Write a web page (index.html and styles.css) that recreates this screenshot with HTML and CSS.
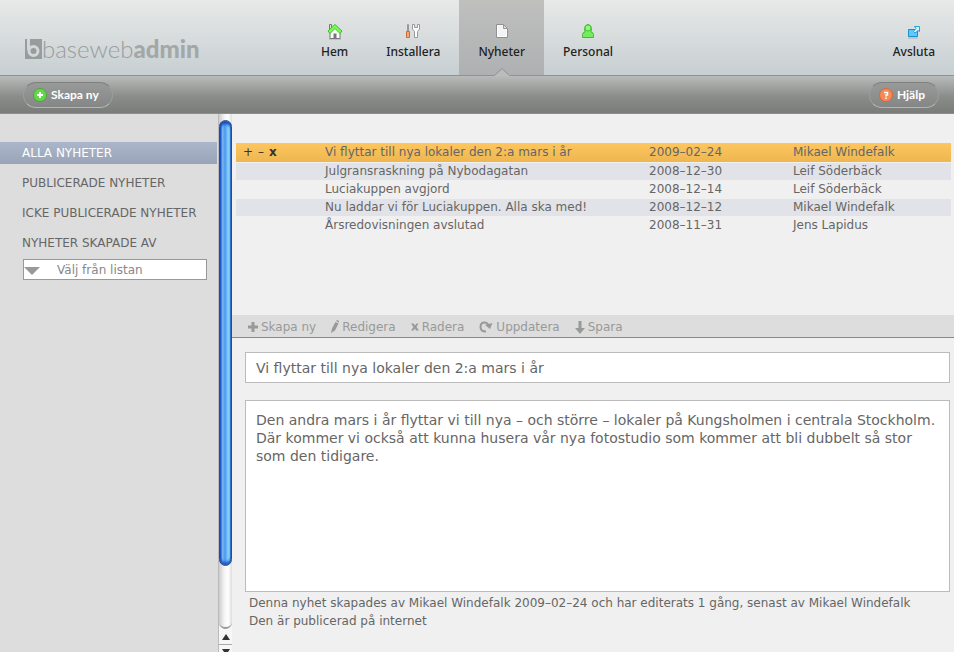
FILE: index.html
```html
<!DOCTYPE html>
<html lang="sv">
<head>
<meta charset="utf-8">
<title>basewebadmin</title>
<link rel="stylesheet" href="styles.css">
</head>
<body>
<header class="top">
  <a class="logo" href="#">
    <svg width="17" height="20" viewBox="0 0 17 20" aria-hidden="true"><path fill="#999c9c" d="M0 0H17V20H0Z"/><path d="M3.500 0V11" stroke="#d2d7d8" stroke-width="3"/><circle cx="8.500" cy="12" r="4.500" fill="none" stroke="#d2d7d8" stroke-width="3"/></svg>
    <span class="logo-light">baseweb</span><span class="logo-bold">admin</span>
  </a>
  <nav class="menu">
    <a class="menu-item" href="#">
      <svg width="16" height="17" viewBox="0 0 16 17"><path d="M2 16H14" stroke="#a9aeae"/><path d="M2.500 9V1.500H4.500V5" fill="#ddd" stroke="#777"/><path d="M3 9L8 4L13 9V15.500H3Z" fill="#fff" stroke="#777"/><path d="M6.500 15V10.500H9.500V15Z" fill="#777"/><path d="M1 8L8 1.500L15 8L13 10.500L8 5.500L3 10.500Z" fill="#7df75b" stroke="#36c51b" stroke-linejoin="round"/></svg>
      <span>Hem</span></a>
    <a class="menu-item" href="#">
      <svg width="16" height="17" viewBox="0 0 16 17"><path d="M2.500 1.500H3.500V8H2.500Z" fill="#fff" stroke="#999"/><path d="M1.500 8.500H4.500V14.500H1.500Z" fill="#ffa36b" stroke="#c96a42" stroke-linejoin="round"/><path d="M7.500 1.500H9.500V4.500H12.500V1.500H14.500V6L12.500 8.500V14.500H9.500V8.500L7.500 6Z" fill="#fff" stroke="#999" stroke-linejoin="round"/></svg>
      <span>Installera</span></a>
    <a class="menu-item current" href="#">
      <svg width="16" height="17" viewBox="0 0 16 17"><path d="M2.500 1.500H9.500L13.500 5.500V14.500H2.500Z" fill="#f4f4f4" stroke="#909090"/><path d="M3.500 2.500V13.500H12.500V6" fill="none" stroke="#fff"/><path d="M9.500 1.500V5.500H13.500Z" fill="#ddd" stroke="#999"/></svg>
      <span>Nyheter</span>
      <svg class="notch" width="16" height="8" viewBox="0 0 16 8" aria-hidden="true"><path d="M0 8L8 0L16 8Z" fill="#bbbdbd"/><path d="M.5 7.500L8 .5L15.500 7.500" fill="none" stroke="#899193"/></svg></a>
    <a class="menu-item" href="#">
      <svg width="16" height="17" viewBox="0 0 16 17"><path d="M2.500 14.500V11.500Q2.500 9.500 5 9Q3.500 2 8 1.500Q12.500 2 11 9Q13.500 9.500 13.500 11.500V14.500Z" fill="#74ed5c" stroke="#46b936"/><circle cx="8" cy="5" r="3" fill="#90fa78" stroke="#46c536"/></svg>
      <span>Personal</span></a>
  </nav>
  <a class="menu-item quit" href="#">
    <svg width="16" height="17" viewBox="0 0 16 17"><path d="M2.500 6.500H11.500V13.500H2.500Z" fill="#62c8f8" stroke="#168fd0" stroke-linejoin="round"/><path d="M2 15H12" stroke="#a6b0b4"/><path d="M8.500 3.500H13.500V8.500L12 7.500L9 10L7.500 8.500L10 5.500Z" fill="#dff8ff" stroke="#279fda" stroke-linejoin="round"/></svg>
    <span>Avsluta</span></a>
</header>

<div class="actions">
  <button class="pill" type="button"><svg width="14" height="14" viewBox="0 0 14 14"><circle cx="7" cy="7" r="6.500" fill="#63d84b" stroke="#4ba637"/><path d="M7 4V10M4 7H10" stroke="#fff" stroke-width="2"/></svg>Skapa ny</button>
  <button class="pill" type="button"><svg width="14" height="14" viewBox="0 0 14 14"><circle cx="7" cy="7" r="6.500" fill="#f58a55" stroke="#d9673b"/><path d="M5 4.500H8.500V7H7V8.500M7 9.500V11" fill="none" stroke="#fff" stroke-width="1.500"/></svg>Hjälp</button>
</div>

<div class="body">
  <aside class="side">
    <nav class="filters">
      <a class="filter active" href="#">ALLA NYHETER</a>
      <a class="filter" href="#">PUBLICERADE NYHETER</a>
      <a class="filter" href="#">ICKE PUBLICERADE NYHETER</a>
    </nav>
    <label class="filter" for="author">NYHETER SKAPADE AV</label>
    <div class="picker">
      <select id="author"><option>Välj från listan</option></select>
      <svg class="picker-arrow" width="16" height="8" viewBox="0 0 16 8" aria-hidden="true"><path d="M0 0H16L8 8Z" fill="#999"/></svg>
    </div>
  </aside>

  <div class="scroll" aria-hidden="true">
    <div class="track"><div class="thumb"></div></div>
    <div class="step"><svg width="8" height="6" viewBox="0 0 8 6"><path d="M4 0L8 6H0Z" fill="#333"/></svg></div>
    <div class="step down"><svg width="8" height="6" viewBox="0 0 8 6"><path d="M0 0H8L4 6Z" fill="#333"/></svg></div>
  </div>

  <main class="content">
    <div class="list">
      <table class="news">
        <colgroup><col class="c-tools"><col class="c-title"><col class="c-date"><col class="c-author"></colgroup>
        <tbody>
        <tr class="selected"><td><button type="button">+</button><button type="button">–</button><button type="button"><b>x</b></button></td><td>Vi flyttar till nya lokaler den 2:a mars i år</td><td>2009–02–24</td><td>Mikael Windefalk</td></tr>
        <tr><td></td><td>Julgransraskning på Nybodagatan</td><td>2008–12–30</td><td>Leif Söderbäck</td></tr>
        <tr><td></td><td>Luciakuppen avgjord</td><td>2008–12–14</td><td>Leif Söderbäck</td></tr>
        <tr><td></td><td>Nu laddar vi för Luciakuppen. Alla ska med!</td><td>2008–12–12</td><td>Mikael Windefalk</td></tr>
        <tr><td></td><td>Årsredovisningen avslutad</td><td>2008–11–31</td><td>Jens Lapidus</td></tr>
        </tbody>
      </table>
    </div>

    <div class="tools">
      <button type="button"><svg width="10" height="10" viewBox="0 0 10 10"><path d="M5 0V10M0 5H10" stroke="#999" stroke-width="3"/></svg>Skapa ny</button>
      <button type="button"><svg width="8" height="14" viewBox="0 0 8 14"><path d="M0 13L1 8.500L4.500 2L7.500 3.500L4 10.500ZM5 1L6 0L8 1V2.500Z" fill="#999"/></svg>Redigera</button>
      <button type="button"><svg width="8" height="8" viewBox="0 0 8 8"><path d="M0 .5H2.500L4 2.500L5.500 .5H7.500L5.500 4L8 7.500H5L4 5.500L2.500 7.500H0L2.500 4Z" fill="#999"/></svg>Radera</button>
      <button type="button"><svg width="14" height="12" viewBox="0 0 14 12"><path d="M7 10.500Q1.500 10.500 1.500 6Q1.500 1.500 5.500 1.500Q8.500 1.500 9.500 4.500" fill="none" stroke="#999" stroke-width="2"/><path d="M6 4L13.500 2L11 8Z" fill="#999"/></svg>Uppdatera</button>
      <button type="button"><svg width="10" height="13" viewBox="0 0 10 13"><path d="M3.500 0H6.500V7H10L5 13L0 7H3.500Z" fill="#999"/></svg>Spara</button>
    </div>

    <form class="editor">
      <input type="text" aria-label="Rubrik" value="Vi flyttar till nya lokaler den 2:a mars i år">
      <textarea aria-label="Text" spellcheck="false">Den andra mars i år flyttar vi till nya – och större – lokaler på Kungsholmen i centrala Stockholm. Där kommer vi också att kunna husera vår nya fotostudio som kommer att bli dubbelt så stor som den tidigare.</textarea>
      <p class="meta">Denna nyhet skapades av Mikael Windefalk 2009–02–24 och har editerats 1 gång, senast av Mikael Windefalk<br>Den är publicerad på internet</p>
    </form>
  </main>
</div>
</body>
</html>
```
FILE: styles.css
```css
* { box-sizing: border-box; }

body {
  margin: 0;
  height: 100vh;
  display: flex;
  flex-direction: column;
  overflow: hidden;
  background: #f0f0f0;
  color: #666;
  font: 12px/18px "DejaVu Sans", sans-serif;
}

a { color: inherit; text-decoration: none; }
svg { display: block; flex: none; }
button { font: inherit; color: inherit; cursor: pointer; }

.top {
  display: flex;
  flex: none;
  height: 76px;
  border-bottom: 1px solid #899598;
  background: linear-gradient(#e8e9e8, #c7cfd2);
  font: 12px/18px "Noto Sans", sans-serif;
  font-weight: 500;
  color: #222;
}

.logo {
  display: flex;
  align-items: flex-end;
  width: 302px;
  padding: 0 0 14px 25px;
  color: #a3a7a7;
  font-family: Lato, sans-serif;
  font-size: 24px;
  line-height: 24px;
}
.logo svg { margin-bottom: 2px; }
.logo-light { font-weight: 300; color: #989c9c; }
.logo-bold { font-weight: 900; }

.menu { display: flex; }
.menu-item {
  position: relative;
  display: flex;
  flex-direction: column;
  align-items: center;
  padding: 23px 19px 0;
  gap: 3px;
}
.current { background: linear-gradient(#bfbfbe, #aeb1b2); }
.notch { position: absolute; bottom: -1px; }
.quit { margin-left: auto; }

.actions {
  display: flex;
  flex: none;
  justify-content: space-between;
  align-items: center;
  height: 38px;
  padding: 0 15px 0 23px;
  border-bottom: 1px solid #8e8e8e;
  background: linear-gradient(#b9bbba, #8b8d8b 55%, #7a7c7a);
}
.pill {
  display: flex;
  align-items: center;
  gap: 4px;
  height: 26px;
  padding: 0 13px 0 9px;
  border: 1px solid #aaa;
  border-color: #7e807f #9c9e9d #b4b6b5;
  border-radius: 13px;
  background: linear-gradient(#989a99, #858786);
  color: #fff;
  font: 700 12px/18px Lato, sans-serif;
}

.body { display: flex; flex: 1; min-height: 0; }

.side {
  width: 218px;
  flex: none;
  padding-top: 28px;
  background: #ddd;
  line-height: 22px;
}
.filter { display: block; margin: 0 1px 8px 0; padding-left: 22px; }
.active {
  background: linear-gradient(#abb6cb, #9aa4b6);
  color: #fff;
}
.picker { position: relative; margin: -3px 11px 0 23px; }
.picker select {
  display: block;
  width: 100%;
  height: 21px;
  padding: 0 0 0 33px;
  border: 1px solid #999;
  border-radius: 0;
  background: #fff;
  appearance: none;
  color: #888;
  font: 12px/18px "DejaVu Sans", sans-serif;
}
.picker-arrow { position: absolute; left: 1px; top: 8px; pointer-events: none; }

.scroll {
  display: flex;
  flex-direction: column;
  flex: none;
  width: 14px;
  background: #f7f7f7;
  border-left: 1px solid #bbb;
}
.track {
  flex: 1;
  padding-top: 6px;
  border-radius: 0 0 7px 7px;
  border-bottom: 2px solid #999;
  background: linear-gradient(90deg, #ccc, #f4f4f4 40%, #fff 70%, #ddd);
}
.thumb {
  height: 88%;
  border: 1px solid #2b4c8c;
  border-radius: 7px;
  background: linear-gradient(90deg, #0b43c4, #83bdf6 20%, #4b98ea 45%, #6fc0fa 65%, #a4ebff 85%, #4386c8);
  box-shadow: inset 0 3px 3px #1747b5, inset 0 -3px 3px #1d58c4;
}
.step {
  display: flex;
  justify-content: center;
  align-items: center;
  height: 15px;
}
.down { height: 8px; align-items: flex-start; padding-top: 4px; border-top: 1px solid #aaa; overflow: hidden; }

.content { display: flex; flex-direction: column; flex: 1; min-width: 0; }
.list { height: 201px; flex: none; padding: 28px 3px 0 4px; }

.news { width: 100%; table-layout: fixed; border-spacing: 0 1px; }
.news td { height: 17px; padding: 0; line-height: 17px; white-space: nowrap; }
.news tr:nth-child(even) { background: #e2e3e8; }
.news .selected { background: linear-gradient(#ffc65f, #edb650); }
.news .selected td { height: 19px; line-height: 19px; }
.news button { padding: 0; border: 0; background: none; margin-right: 5px; color: #333; }
.news td:first-child { padding-left: 7px; }
.c-tools { width: 89px; }
.c-date { width: 144px; }
.c-author { width: 158px; }

.tools {
  display: flex;
  flex: none;
  gap: 15px;
  height: 23px;
  padding: 2px 0 0 16px;
  border-bottom: 1px solid #888;
  background: #ddd;
  color: #999;
}
.tools button {
  display: flex;
  align-items: center;
  gap: 3px;
  padding: 0;
  border: 0;
  background: none;
}

.editor {
  display: flex;
  flex-direction: column;
  flex: 1;
  min-height: 0;
  padding: 14px 4px 22px 13px;
}
.editor input, .editor textarea {
  display: block;
  width: 100%;
  margin: 0;
  padding: 0 10px;
  border: 1px solid #bbb;
  border-radius: 0;
  background: #fff;
  color: #666;
  font: 14px/18px "DejaVu Sans", sans-serif;
}
.editor input { height: 31px; flex: none; }
.editor textarea { flex: 1; margin-top: 17px; padding: 10px 4px 10px 10px; resize: none; }
.meta { margin: 2px 4px 0; }
```
